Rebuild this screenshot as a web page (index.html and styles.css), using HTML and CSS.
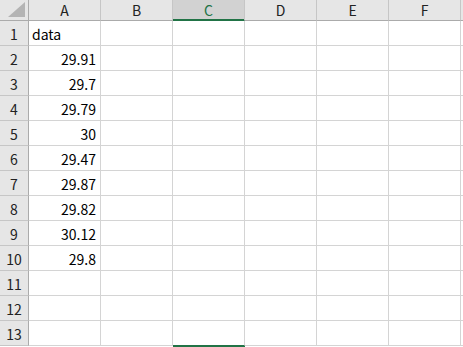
FILE: index.html
```html
<!DOCTYPE html>
<html lang="ja">
<head>
    <meta charset="UTF-8">
    <title>Sheet1</title>
    <link rel="stylesheet" href="styles.css">
</head>
<body>
    <div class="sheet">
        <!-- column headers -->
        <div class="corner"><svg width="28" height="20" viewBox="0 0 28 20"><polygon points="8,17 25,17 25,2" fill="#b4b4b4"/></svg></div>
        <div class="col-head">A</div>
        <div class="col-head">B</div>
        <div class="col-head active">C</div>
        <div class="col-head">D</div>
        <div class="col-head">E</div>
        <div class="col-head">F</div>
        <div class="col-head edge"></div>

        <div class="row-head">1</div><div class="cell">data</div><div class="cell"></div><div class="cell"></div><div class="cell"></div><div class="cell"></div><div class="cell"></div><div class="cell edge"></div>
        <div class="row-head">2</div><div class="cell num">29.91</div><div class="cell"></div><div class="cell"></div><div class="cell"></div><div class="cell"></div><div class="cell"></div><div class="cell edge"></div>
        <div class="row-head">3</div><div class="cell num">29.7</div><div class="cell"></div><div class="cell"></div><div class="cell"></div><div class="cell"></div><div class="cell"></div><div class="cell edge"></div>
        <div class="row-head">4</div><div class="cell num">29.79</div><div class="cell"></div><div class="cell"></div><div class="cell"></div><div class="cell"></div><div class="cell"></div><div class="cell edge"></div>
        <div class="row-head">5</div><div class="cell num">30</div><div class="cell"></div><div class="cell"></div><div class="cell"></div><div class="cell"></div><div class="cell"></div><div class="cell edge"></div>
        <div class="row-head">6</div><div class="cell num">29.47</div><div class="cell"></div><div class="cell"></div><div class="cell"></div><div class="cell"></div><div class="cell"></div><div class="cell edge"></div>
        <div class="row-head">7</div><div class="cell num">29.87</div><div class="cell"></div><div class="cell"></div><div class="cell"></div><div class="cell"></div><div class="cell"></div><div class="cell edge"></div>
        <div class="row-head">8</div><div class="cell num">29.82</div><div class="cell"></div><div class="cell"></div><div class="cell"></div><div class="cell"></div><div class="cell"></div><div class="cell edge"></div>
        <div class="row-head">9</div><div class="cell num">30.12</div><div class="cell"></div><div class="cell"></div><div class="cell"></div><div class="cell"></div><div class="cell"></div><div class="cell edge"></div>
        <div class="row-head">10</div><div class="cell num">29.8</div><div class="cell"></div><div class="cell"></div><div class="cell"></div><div class="cell"></div><div class="cell"></div><div class="cell edge"></div>
        <div class="row-head">11</div><div class="cell"></div><div class="cell"></div><div class="cell"></div><div class="cell"></div><div class="cell"></div><div class="cell"></div><div class="cell edge"></div>
        <div class="row-head">12</div><div class="cell"></div><div class="cell"></div><div class="cell"></div><div class="cell"></div><div class="cell"></div><div class="cell"></div><div class="cell edge"></div>
        <div class="row-head">13</div><div class="cell"></div><div class="cell"></div><div class="cell sel-end"></div><div class="cell"></div><div class="cell"></div><div class="cell"></div><div class="cell edge"></div>
    </div>
</body>
</html>
```

FILE: styles.css
```css
:root {
    --head-bg: #e6e6e6;
    --head-active: #d2d2d2;
    --head-line: #c6c6c6;
    --head-edge: #ababab;
    --grid-line: #d4d4d4;
    --excel-green: #217346;
}

* {
    box-sizing: border-box;
}

body {
    margin: 0;
    background: #ffffff;
    font-family: "Noto Sans CJK JP", "Noto Sans", sans-serif;
    font-size: 14px;
    color: #000;
    overflow: hidden;
}

.sheet {
    display: grid;
    grid-template-columns: 29px repeat(6, 72px) 1fr;
    grid-template-rows: 21px repeat(13, 25px) 2px;
    width: 463px;
}

.corner,
.col-head,
.row-head {
    background: var(--head-bg);
    display: flex;
    align-items: center;
    justify-content: center;
    line-height: 1;
}

.corner {
    border-right: 1px solid var(--head-edge);
    border-bottom: 1px solid var(--head-edge);
    align-items: flex-start;
    justify-content: flex-start;
}

.corner svg {
    display: block;
}

.col-head {
    border-right: 1px solid var(--head-line);
    border-bottom: 1px solid var(--head-edge);
    color: #222;
    padding-bottom: 1px;
}

.col-head.active {
    background: var(--head-active);
    color: var(--excel-green);
    border-bottom-color: var(--excel-green);
    box-shadow: inset 0 -1px 0 var(--excel-green);
}

.row-head {
    border-right: 1px solid var(--head-edge);
    border-bottom: 1px solid var(--head-line);
    color: #222;
    padding-top: 1px;
}

.cell {
    border-right: 1px solid var(--grid-line);
    border-bottom: 1px solid var(--grid-line);
    display: flex;
    align-items: center;
    padding: 1px 4px 0 3px;
    line-height: 1;
    white-space: nowrap;
}

.cell.num {
    justify-content: flex-end;
}

.edge {
    border-right: none;
}

.sel-end {
    border-bottom-color: var(--excel-green);
    box-shadow: 0 1px 0 var(--excel-green);
}
```
